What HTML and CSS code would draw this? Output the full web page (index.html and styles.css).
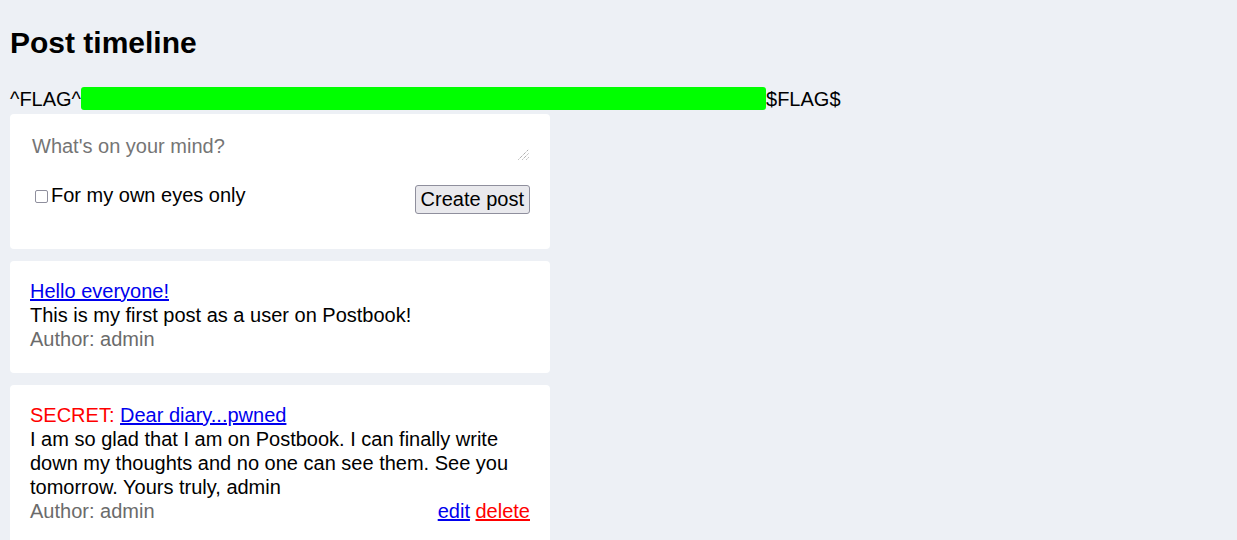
FILE: index.html
```html
<!DOCTYPE html>
<html lang="en">
<head>
<meta charset="utf-8">
<title>Postbook - Timeline</title>
<link rel="stylesheet" href="styles.css">
</head>
<body>
<main class="page">
  <h1 class="title">Post timeline</h1>
  <p class="flag">^FLAG^<span class="redacted"></span>$FLAG$</p>

  <section class="card composer">
    <div class="input-wrap">
      <textarea class="composer-input" rows="1" placeholder="What's on your mind?"></textarea>
      <svg class="resizer" width="11" height="11" viewBox="0 0 11 11" aria-hidden="true">
        <g stroke="#8a8a8a" stroke-width="1" stroke-dasharray="1 1">
          <line x1="0.5" y1="10.5" x2="10.5" y2="0.5"/>
          <line x1="4.5" y1="10.5" x2="10.5" y2="4.5"/>
          <line x1="8.5" y1="10.5" x2="10.5" y2="8.5"/>
        </g>
      </svg>
    </div>
    <div class="composer-row">
      <label class="private"><input type="checkbox" class="private-box">For my own eyes only</label>
      <button class="create-btn" type="button">Create post</button>
    </div>
  </section>

  <article class="card post">
    <div class="post-title"><a href="#">Hello everyone!</a></div>
    <div class="post-body">This is my first post as a user on Postbook!</div>
    <div class="post-meta"><span class="author">Author: admin</span></div>
  </article>

  <article class="card post">
    <div class="post-title"><span class="secret">SECRET:</span> <a href="#">Dear diary...pwned</a></div>
    <div class="post-body">I am so glad that I am on Postbook. I can finally write down my thoughts and no one can see them. See you tomorrow. Yours truly, admin</div>
    <div class="post-meta"><span class="author">Author: admin</span><span class="actions"><a href="#" class="edit">edit</a> <a href="#" class="delete">delete</a></span></div>
  </article>
</main>
</body>
</html>
```
FILE: styles.css
```css
html, body {
  margin: 0;
  padding: 0;
  background: #edf0f5;
}
body {
  font-family: "Liberation Sans", Arial, sans-serif;
  font-size: 20px;
  line-height: 24px;
  color: #000;
}
.page {
  padding: 25px 10px 0 10px;
}
.title {
  margin: 0 0 26px 0;
  font-size: 30px;
  line-height: 36px;
  font-weight: bold;
}
.flag {
  margin: 0 0 3px 0;
  line-height: 24px;
}
.redacted {
  display: inline-block;
  width: 685px;
  height: 23px;
  vertical-align: -4px;
  background: #00ff00;
  border-radius: 3px;
}
.card {
  width: 540px;
  box-sizing: border-box;
  background: #fff;
  border-radius: 4px;
  padding: 18px 20px 22px 20px;
  margin-bottom: 12px;
}
.input-wrap {
  position: relative;
}
.composer-input {
  display: block;
  width: 100%;
  box-sizing: border-box;
  height: 26px;
  margin: 1px 0 0 0;
  padding: 1px 2px;
  border: none;
  outline: none;
  font-family: inherit;
  font-size: 20px;
  line-height: 24px;
  resize: none;
  background: #fff;
}
.composer-input::placeholder {
  color: #757575;
}
.resizer {
  position: absolute;
  right: 1px;
  bottom: -1px;
}
.composer-row {
  display: flex;
  justify-content: space-between;
  align-items: flex-start;
  margin-top: 24px;
  margin-bottom: 13px;
}
.private {
  display: flex;
  align-items: flex-start;
}
.private-box {
  appearance: none;
  -webkit-appearance: none;
  box-sizing: border-box;
  flex: none;
  width: 13px;
  height: 13px;
  margin: 7px 3px 0 5px;
  border: 1.5px solid #8f8f9d;
  border-radius: 2px;
  background: #fff;
}
.create-btn {
  margin-top: 2px;
  font-family: inherit;
  font-size: 20px;
  line-height: 23px;
  padding: 2px 5px;
  border: 1px solid #8f8f9d;
  border-radius: 3px;
  background: #e9e9ed;
  color: #000;
}
a {
  color: #0000ee;
  text-decoration: underline;
}
.secret {
  color: #ff0000;
}
.post-meta {
  display: flex;
  justify-content: space-between;
}
.author {
  color: #6b6b6b;
}
.actions .delete {
  color: #ff0000;
}
```
